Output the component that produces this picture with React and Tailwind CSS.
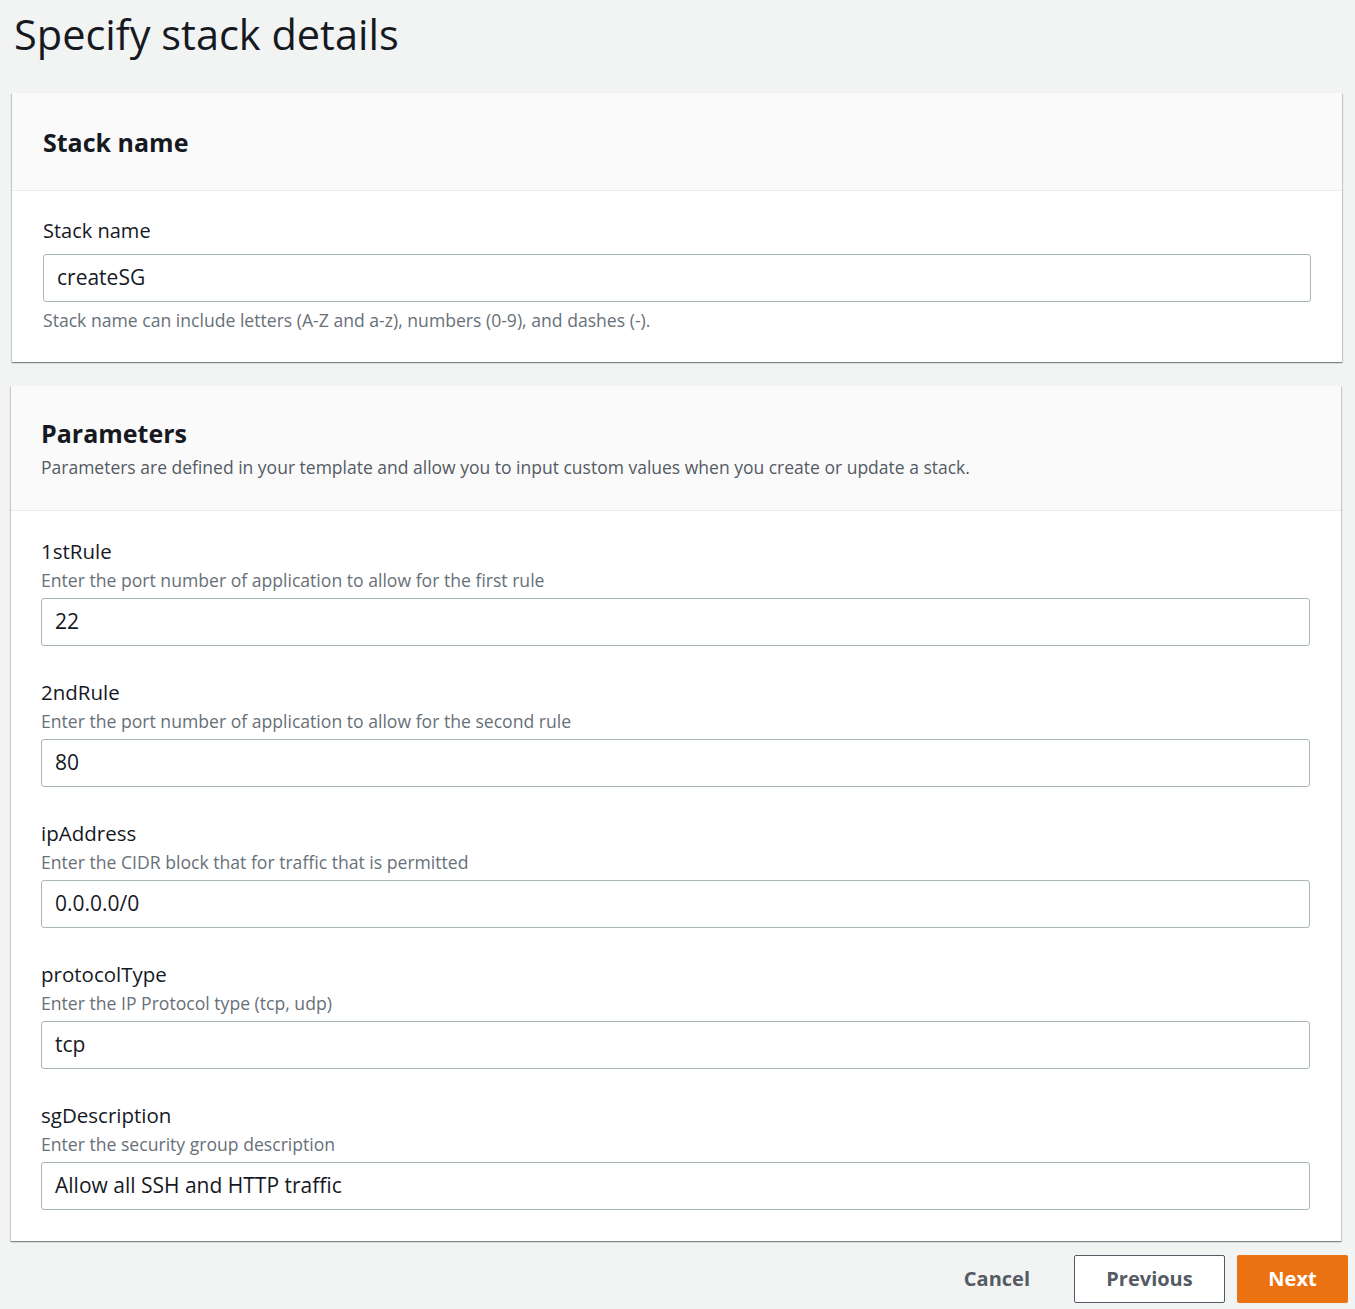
import React from "react";

const font = { fontFamily: '"Open Sans", "Noto Sans", Arial, sans-serif' };

function Field({ label, desc, value }) {
  return (
    <div className="flex flex-col">
      <div className="text-[20.5px] leading-[24px] text-[#16191f]">{label}</div>
      <div className="mt-[7px] text-[17.6px] leading-[20px] text-[#687078]">{desc}</div>
      <div className="mt-[8px] h-[48px] rounded-[3px] border border-[#aab7b8] bg-white px-[13px] flex items-center text-[21px] text-[#16191f]">
        {value}
      </div>
    </div>
  );
}

export default function App() {
  return (
    <div style={font} className="min-h-[1309px] w-[1355px] bg-[#f2f3f3] text-[#16191f]">
      <div className="pl-[14px] pt-[5px]">
        <h1 className="text-[41.5px] leading-[58px] font-normal text-[#16191f]">Specify stack details</h1>
      </div>

      <div className="ml-[12px] mr-[13px] mt-[30px] bg-white shadow-[0_1px_1px_0_rgba(0,28,36,0.3),1px_1px_1px_0_rgba(0,28,36,0.15),-1px_1px_1px_0_rgba(0,28,36,0.15)]">
        <div className="h-[98px] bg-[#fafafa] border-b border-[#eaeded] flex items-center px-[31px]">
          <h2 className="text-[25px] font-bold leading-[32px]">Stack name</h2>
        </div>
        <div className="px-[31px] pt-[28px] pb-[31px]">
          <div className="text-[20px] leading-[24px]">Stack name</div>
          <div className="mt-[11px] h-[48px] rounded-[3px] border border-[#aab7b8] bg-white px-[13px] flex items-center text-[21px]">
            createSG
          </div>
          <div className="mt-[7px] text-[17.6px] leading-[22px] text-[#687078]">
            Stack name can include letters (A-Z and a-z), numbers (0-9), and dashes (-).
          </div>
        </div>
      </div>

      <div className="ml-[11px] mr-[14px] mt-[24px] bg-white shadow-[0_1px_1px_0_rgba(0,28,36,0.3),1px_1px_1px_0_rgba(0,28,36,0.15),-1px_1px_1px_0_rgba(0,28,36,0.15)]">
        <div className="h-[125px] bg-[#fafafa] border-b border-[#eaeded] px-[30px] pt-[30px]">
          <h2 className="text-[25px] font-bold leading-[34px]">Parameters</h2>
          <div className="mt-[6px] text-[17.5px] leading-[22px] text-[#545b64]">
            Parameters are defined in your template and allow you to input custom values when you create or update a stack.
          </div>
        </div>
        <div className="pl-[30px] pr-[31px] pt-[28px] pb-[31px] flex flex-col gap-[34px]">
          <Field label="1stRule" desc="Enter the port number of application to allow for the first rule" value="22" />
          <Field label="2ndRule" desc="Enter the port number of application to allow for the second rule" value="80" />
          <Field label="ipAddress" desc="Enter the CIDR block that for traffic that is permitted" value="0.0.0.0/0" />
          <Field label="protocolType" desc="Enter the IP Protocol type (tcp, udp)" value="tcp" />
          <Field label="sgDescription" desc="Enter the security group description" value="Allow all SSH and HTTP traffic" />
        </div>
      </div>

      <div className="mt-[14px] flex justify-end items-center pr-[7px]">
        <button className="h-[48px] px-[24px] text-[20px] font-bold text-[#545b64] mr-[20px]">Cancel</button>
        <button className="h-[48px] w-[151px] rounded-[2px] border border-[#545b64] bg-white text-[20px] font-bold text-[#545b64] mr-[12px]">Previous</button>
        <button className="h-[48px] w-[111px] rounded-[2px] bg-[#ec7211] text-[20px] font-bold text-white">Next</button>
      </div>
    </div>
  );
}
